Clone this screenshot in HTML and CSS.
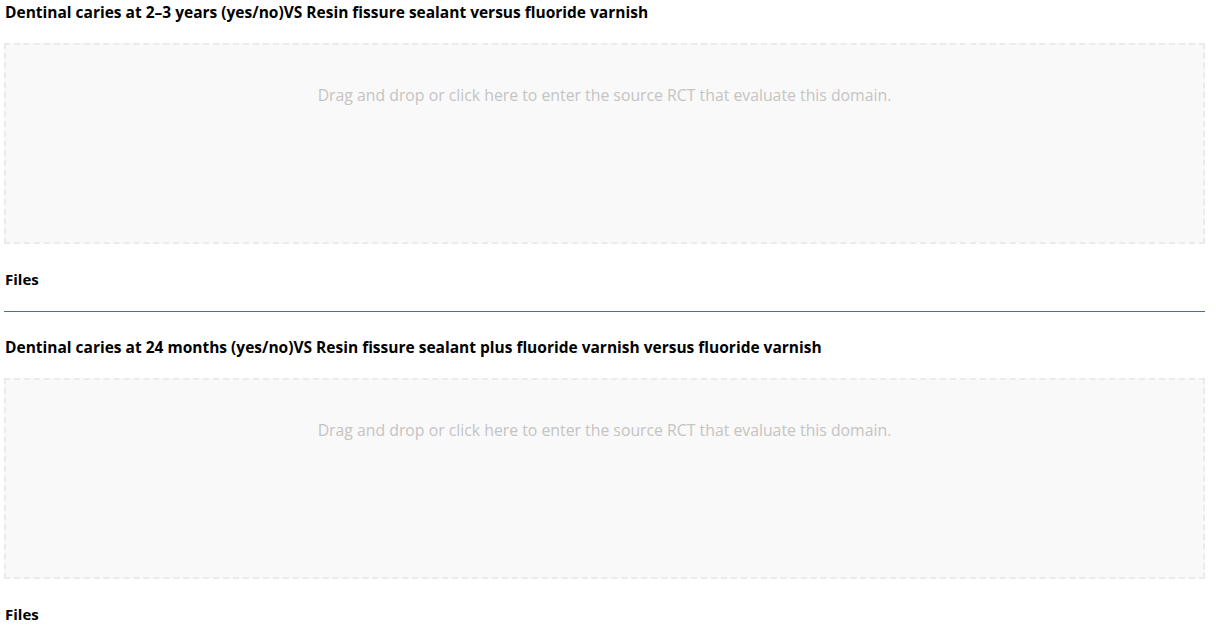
FILE: index.html
```html
<!DOCTYPE html>
<html lang="en">
<head>
<meta charset="utf-8">
<title>Domains</title>
<link rel="stylesheet" href="styles.css">
</head>
<body>
<div class="page">
  <section class="domain">
    <h3 class="domain-title">Dentinal caries at 2–3 years (yes/no)VS Resin fissure sealant versus fluoride varnish</h3>
    <div class="dropzone">
      <p class="dropzone-text">Drag and drop or click here to enter the source RCT that evaluate this domain.</p>
    </div>
    <h3 class="files-title">Files</h3>
  </section>
  <hr class="divider">
  <section class="domain">
    <h3 class="domain-title">Dentinal caries at 24 months (yes/no)VS Resin fissure sealant plus fluoride varnish versus fluoride varnish</h3>
    <div class="dropzone">
      <p class="dropzone-text">Drag and drop or click here to enter the source RCT that evaluate this domain.</p>
    </div>
    <h3 class="files-title">Files</h3>
  </section>
</div>
</body>
</html>
```

FILE: styles.css
```css
html, body {
  margin: 0;
  padding: 0;
  background: #ffffff;
}

body {
  font-family: "Open Sans", "Noto Sans", "Liberation Sans", sans-serif;
  color: #000000;
}

.page {
  width: 1201px;
  margin-left: 4px;
  padding-top: 2px;
}

.domain {
  display: flex;
  flex-direction: column;
}

.domain-title {
  margin: 0 0 21px 1px;
  font-size: 15.5px;
  line-height: 20px;
  font-weight: 700;
}

.dropzone {
  box-sizing: border-box;
  height: 201px;
  border: 2px dashed #ebebeb;
  background: #f9f9f9;
  display: flex;
  justify-content: center;
  padding-top: 39px;
}

.dropzone-text {
  margin: 0;
  font-size: 15.8px;
  line-height: 22px;
  color: #c4c4c4;
}

.files-title {
  margin: 25px 0 0 1px;
  font-size: 15px;
  line-height: 20px;
  font-weight: 700;
}

.divider {
  margin: 22px 0 25px 0;
  border: 0;
  border-top: 1px solid #4a6f9c;
  height: 0;
}
```
